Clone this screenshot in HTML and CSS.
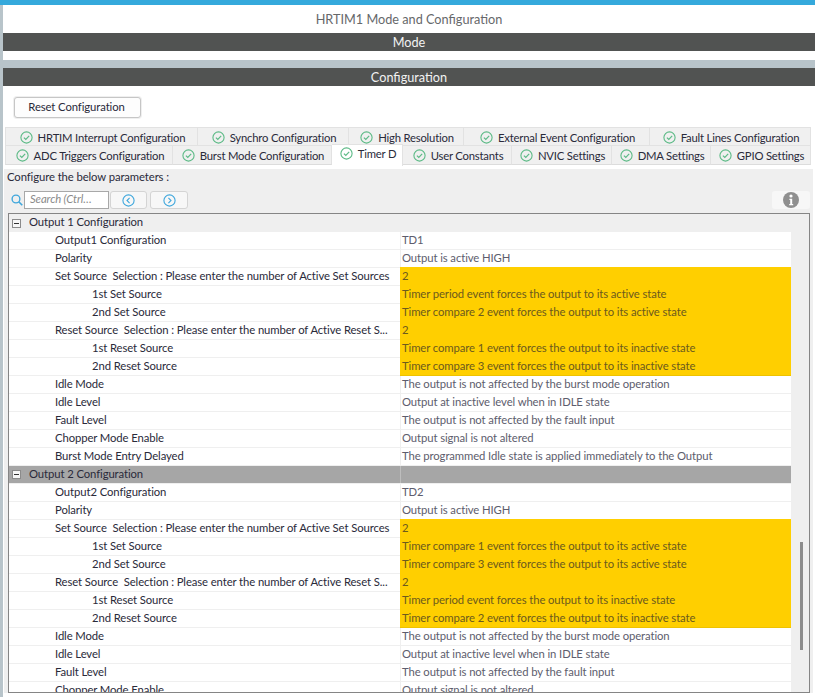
FILE: index.html
```html
<!DOCTYPE html>
<html lang="en">
<head>
<meta charset="utf-8">
<title>HRTIM1 Mode and Configuration</title>
<link rel="stylesheet" href="styles.css">
</head>
<body>
<svg class="defs" width="0" height="0" aria-hidden="true">
  <symbol id="ok" viewBox="0 0 13 13"><circle cx="6.5" cy="6.5" r="5.6" fill="none" stroke="#5cba86" stroke-width="1.1"/><path d="M3.9 6.6l1.9 1.9 3.4-3.6" fill="none" stroke="#5cba86" stroke-width="1.2"/></symbol>
  <symbol id="minus" viewBox="0 0 9 9"><rect x=".5" y=".5" width="8" height="8" fill="#f7f7f7" stroke="#8b8b8b"/><path d="M2 4.5h5" stroke="#333"/></symbol>
</svg>
<div class="app">
  <div class="title">HRTIM1 Mode and Configuration</div>
  <div class="bar">Mode</div>
  <div class="mode-body"></div>
  <div class="gap"></div>
  <div class="bar">Configuration</div>
  <div class="config">
    <div class="reset-wrap"><button class="reset">Reset Configuration</button></div>
    <div class="tabs tabs-top">
      <div class="tab"><svg class="ok"><use href="#ok"/></svg>HRTIM Interrupt Configuration</div>
      <div class="tab"><svg class="ok"><use href="#ok"/></svg>Synchro Configuration</div>
      <div class="tab"><svg class="ok"><use href="#ok"/></svg>High Resolution</div>
      <div class="tab"><svg class="ok"><use href="#ok"/></svg>External Event Configuration</div>
      <div class="tab"><svg class="ok"><use href="#ok"/></svg>Fault Lines Configuration</div>
    </div>
    <div class="tabs tabs-bottom">
      <div class="tab"><svg class="ok"><use href="#ok"/></svg>ADC Triggers Configuration</div>
      <div class="tab"><svg class="ok"><use href="#ok"/></svg>Burst Mode Configuration</div>
      <div class="tab active"><svg class="ok"><use href="#ok"/></svg>Timer D</div>
      <div class="tab"><svg class="ok"><use href="#ok"/></svg>User Constants</div>
      <div class="tab"><svg class="ok"><use href="#ok"/></svg>NVIC Settings</div>
      <div class="tab"><svg class="ok"><use href="#ok"/></svg>DMA Settings</div>
      <div class="tab"><svg class="ok"><use href="#ok"/></svg>GPIO Settings</div>
    </div>
    <div class="panel">
      <div class="panel-label">Configure the below parameters :</div>
      <div class="toolbar">
        <svg class="search-icon" viewBox="0 0 13 13"><circle cx="5.4" cy="5.4" r="4.2" fill="none" stroke="#3fa7dc" stroke-width="1.5"/><path d="M8.4 8.4l3.8 3.8" stroke="#3fa7dc" stroke-width="1.8"/></svg>
        <div class="search">Search (Ctrl…</div>
        <div class="nav"><svg viewBox="0 0 13 13"><circle cx="6.5" cy="6.5" r="5.6" fill="none" stroke="#3fa7dc" stroke-width="1.1"/><path d="M7.6 3.9L5 6.5l2.6 2.6" fill="none" stroke="#3fa7dc" stroke-width="1.1"/></svg></div>
        <div class="nav nav-next"><svg viewBox="0 0 13 13"><circle cx="6.5" cy="6.5" r="5.6" fill="none" stroke="#3fa7dc" stroke-width="1.1"/><path d="M5.4 3.9L8 6.5l-2.6 2.6" fill="none" stroke="#3fa7dc" stroke-width="1.1"/></svg></div>
        <div class="info"><svg viewBox="0 0 16 16"><circle cx="8" cy="8" r="8" fill="#8f8f8f"/><circle cx="8" cy="4" r="1.6" fill="#fff"/><path d="M6.4 6.8h2.8v5.2h1v1.2H6.2V12h1v-4H6.4z" fill="#fff"/></svg></div>
      </div>
      <div class="table">
        <div class="rows">
          <div class="row section"><div class="name"><svg class="minus"><use href="#minus"/></svg><span class="section-label">Output 1 Configuration</span></div><div class="val"></div></div>
          <div class="row"><div class="name l1">Output1 Configuration</div><div class="val">TD1</div></div>
          <div class="row"><div class="name l1">Polarity</div><div class="val">Output is active HIGH</div></div>
          <div class="row"><div class="name l1">Set Source&nbsp; Selection : Please enter the number of Active Set Sources</div><div class="val warn">2</div></div>
          <div class="row"><div class="name l2">1st Set Source</div><div class="val warn">Timer period event forces the output to its active state</div></div>
          <div class="row"><div class="name l2">2nd Set Source</div><div class="val warn">Timer compare 2 event forces the output to its active state</div></div>
          <div class="row"><div class="name l1">Reset Source&nbsp; Selection : Please enter the number of Active Reset S...</div><div class="val warn">2</div></div>
          <div class="row"><div class="name l2">1st Reset Source</div><div class="val warn">Timer compare 1 event forces the output to its inactive state</div></div>
          <div class="row"><div class="name l2">2nd Reset Source</div><div class="val warn">Timer compare 3 event forces the output to its inactive state</div></div>
          <div class="row"><div class="name l1">Idle Mode</div><div class="val">The output is not affected by the burst mode operation</div></div>
          <div class="row"><div class="name l1">Idle Level</div><div class="val">Output at inactive level when in IDLE state</div></div>
          <div class="row"><div class="name l1">Fault Level</div><div class="val">The output is not affected by the fault input</div></div>
          <div class="row"><div class="name l1">Chopper Mode Enable</div><div class="val">Output signal is not altered</div></div>
          <div class="row"><div class="name l1">Burst Mode Entry Delayed</div><div class="val">The programmed Idle state is applied immediately to the Output</div></div>
          <div class="row section selected"><div class="name"><svg class="minus"><use href="#minus"/></svg><span class="section-label">Output 2 Configuration</span></div><div class="val"></div></div>
          <div class="row"><div class="name l1">Output2 Configuration</div><div class="val">TD2</div></div>
          <div class="row"><div class="name l1">Polarity</div><div class="val">Output is active HIGH</div></div>
          <div class="row"><div class="name l1">Set Source&nbsp; Selection : Please enter the number of Active Set Sources</div><div class="val warn">2</div></div>
          <div class="row"><div class="name l2">1st Set Source</div><div class="val warn">Timer compare 1 event forces the output to its active state</div></div>
          <div class="row"><div class="name l2">2nd Set Source</div><div class="val warn">Timer compare 3 event forces the output to its active state</div></div>
          <div class="row"><div class="name l1">Reset Source&nbsp; Selection : Please enter the number of Active Reset S...</div><div class="val warn">2</div></div>
          <div class="row"><div class="name l2">1st Reset Source</div><div class="val warn">Timer period event forces the output to its inactive state</div></div>
          <div class="row"><div class="name l2">2nd Reset Source</div><div class="val warn">Timer compare 2 event forces the output to its inactive state</div></div>
          <div class="row"><div class="name l1">Idle Mode</div><div class="val">The output is not affected by the burst mode operation</div></div>
          <div class="row"><div class="name l1">Idle Level</div><div class="val">Output at inactive level when in IDLE state</div></div>
          <div class="row"><div class="name l1">Fault Level</div><div class="val">The output is not affected by the fault input</div></div>
          <div class="row"><div class="name l1">Chopper Mode Enable</div><div class="val">Output signal is not altered</div></div>
        </div>
        <div class="scroll"><div class="thumb"></div></div>
      </div>
    </div>
  </div>
</div>
</body>
</html>
```
FILE: styles.css
```css
* { box-sizing: border-box; }
html, body { margin: 0; padding: 0; height: 697px; overflow: hidden; }
body { font-family: Lato, Roboto, sans-serif; font-size: 11.3px; letter-spacing: -0.1px; color: #2a2a3a; background: #b8c4ca; }
.defs { position: absolute; }
.app { height: 697px; border-top: 5px solid #35a9dc; padding-left: 3px; display: flex; flex-direction: column; overflow: hidden; }
.title { height: 28px; background: #fff; color: #66686a; font-size: 12.7px; letter-spacing: 0; display: flex; align-items: center; justify-content: center; padding-bottom: 1px; }
.bar { height: 18px; flex: none; background: #515352; color: #f2f2f2; font-size: 12.7px; letter-spacing: 0; display: flex; align-items: center; justify-content: center; }
.mode-body { height: 9px; flex: none; background: #fff; }
.gap { height: 8px; flex: none; background: #b8c4ca; }
.config { flex: 1; background: #fff; min-height: 0; display: flex; flex-direction: column; }
.reset-wrap { padding: 11px 0 0 11px; height: 41px; flex: none; }
.reset { width: 127px; height: 21px; padding: 0 2px 3px 0; background: #fdfdfd; border: 1px solid #c6c6c6; border-radius: 3px; box-shadow: 0 0 0 1px #efefef; font: inherit; letter-spacing: inherit; color: #2a2a3a; }
.tabs { display: grid; flex: none; margin-left: 2px; width: 806px; }
.tabs-top { height: 18px; grid-template-columns: 193px 151px 115px 186px 161px; }
.tabs-bottom { height: 20px; grid-template-columns: 168px 159px 71px 109px 100px 99px 100px; }
.tab { background: #f0f0f0; border: 1px solid #e2e2e2; border-bottom: 0; border-left: 0; display: flex; align-items: center; justify-content: center; gap: 5px; white-space: nowrap; padding: 1px 0 0 2px; letter-spacing: -0.2px; }
.tab:first-child { border-left: 1px solid #e2e2e2; }
.tabs-bottom .tab { height: 20px; border-bottom: 1px solid #dcdcdc; padding-top: 0; }
.tabs-bottom .tab.active { background: #fff; height: 22px; margin-top: -1px; position: relative; border-bottom: 0; padding-bottom: 5px; }
.ok { width: 13px; height: 13px; flex: none; }
.panel { flex: 1; min-height: 0; margin: 4px 2px 4px 1px; background: #efefef; padding: 0 3px 0 4px; display: flex; flex-direction: column; }
.panel-label { height: 18px; flex: none; display: flex; align-items: center; margin-left: -1px; padding-bottom: 3px; color: #2a2a3a; }
.toolbar { height: 26px; flex: none; display: flex; align-items: flex-start; padding-top: 4px; }
.search-icon { width: 12px; height: 12px; margin: 3px 1px 0 3px; flex: none; }
.search { width: 85px; height: 18px; background: #fff; border: 1px solid #a8a8a8; color: #8a8a8a; font-style: italic; padding-left: 5px; line-height: 13px; }
.nav { width: 37px; height: 18px; margin-left: 1px; background: #f7f7f7; border: 1px solid #d4d4d4; border-radius: 3px; display: flex; align-items: center; justify-content: center; }
.nav-next { margin-left: 3px; width: 38px; }
.nav svg { width: 13px; height: 13px; }
.info { margin-left: auto; width: 38px; height: 18px; background: #f7f7f7; border-radius: 3px; display: flex; align-items: center; justify-content: center; }
.info svg { width: 16px; height: 16px; }
.table { flex: 1; min-height: 0; border: 1px solid #858585; display: flex; overflow: hidden; background: #fff; }
.rows { width: 782px; flex: none; }
.row { height: 18px; display: flex; line-height: 16px; background: #fff; border-bottom: 1px solid #efefef; }
.name { width: 391px; flex: none; white-space: nowrap; overflow: hidden; }
.val { flex: 1; padding-left: 1px; color: #5d5d6d; white-space: nowrap; border-left: 1px solid #efefef; }
.l1 { padding-left: 46px; }
.l2 { padding-left: 83px; }
.warn { background: #ffcf00; color: #6c5a1e; border-left: 0; padding-left: 2px; border-bottom: 1px solid #eec200; height: 18px; box-shadow: 0 -1px 0 #ffcf00; }
.section { background: #efefef; border-bottom: 0; }
.section .name { display: flex; align-items: center; gap: 8px; padding-left: 3px; }
.section-label { margin-bottom: 3px; }
.section.selected .section-label { margin-bottom: 1px; }
.section .val { border-left: 0; }
.section.selected { background: #a6a6a6; border-bottom: 1px solid #efefef; }
.section.selected .val { border-left: 1px solid #bdbdbd; }
.minus { width: 9px; height: 9px; flex: none; }
.scroll { flex: 1; background: #efefef; position: relative; }
.thumb { position: absolute; left: 9px; top: 328px; width: 3px; height: 108px; background: #8c8c8c; }
```
